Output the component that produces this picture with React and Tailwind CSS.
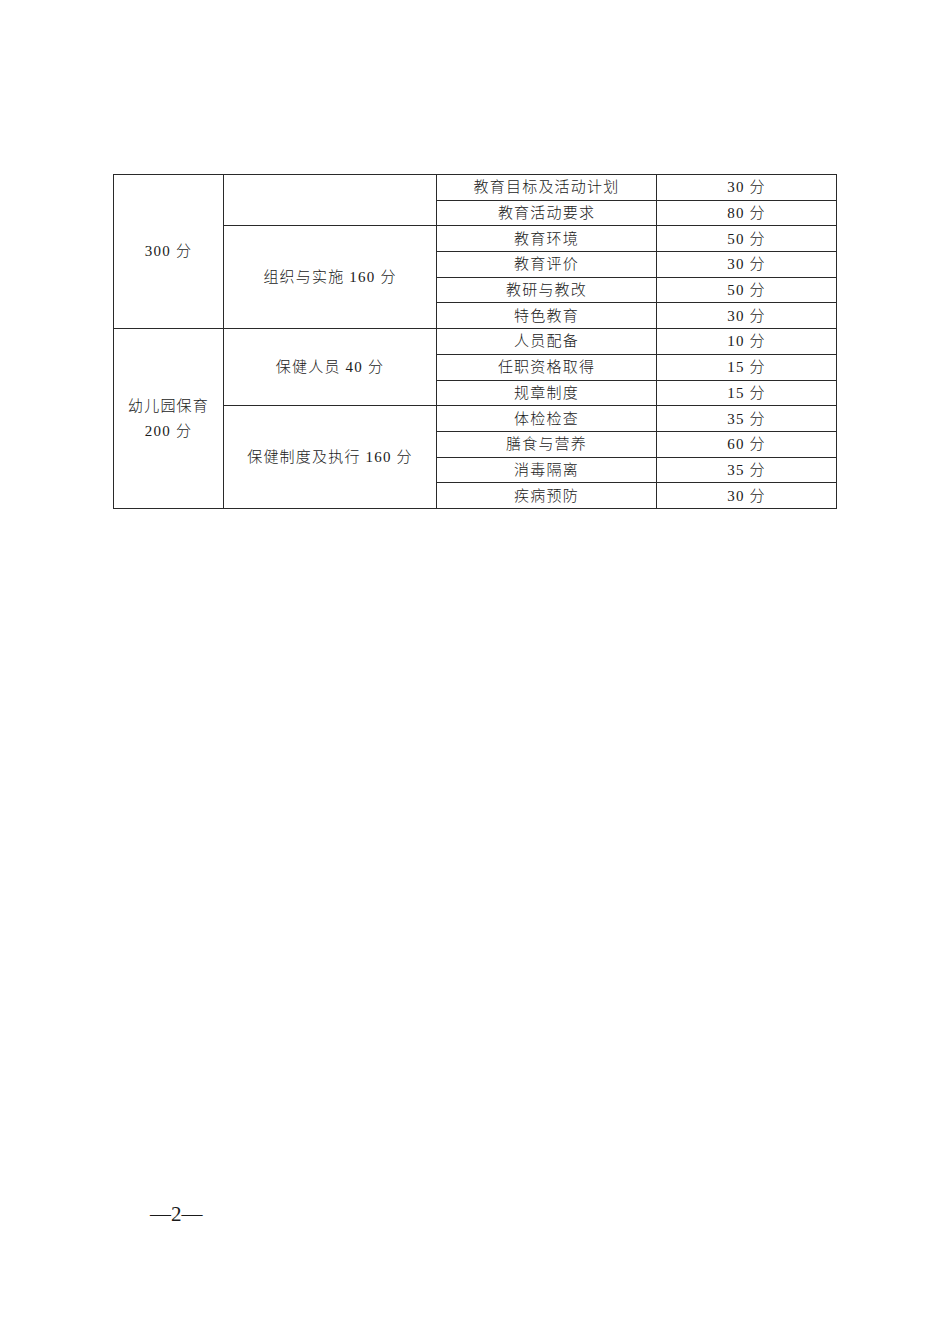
const rows = [
  ["教育目标及活动计划", "30 分"],
  ["教育活动要求", "80 分"],
  ["教育环境", "50 分"],
  ["教育评价", "30 分"],
  ["教研与教改", "50 分"],
  ["特色教育", "30 分"],
  ["人员配备", "10 分"],
  ["任职资格取得", "15 分"],
  ["规章制度", "15 分"],
  ["体检检查", "35 分"],
  ["膳食与营养", "60 分"],
  ["消毒隔离", "35 分"],
  ["疾病预防", "30 分"],
];

// first and second columns, keyed by the row they start on
const groups = {
  0: { span: 6, text: ["300 分"] },
  6: { span: 7, text: ["幼儿园保育", "200 分"] },
};
const subs = {
  0: { span: 2, text: "" },
  2: { span: 4, text: "组织与实施 160 分" },
  6: { span: 3, text: "保健人员 40 分" },
  9: { span: 4, text: "保健制度及执行 160 分" },
};

const cell = "border border-[#2a2a2a] text-center align-middle p-0";

export default function App() {
  return (
    <div
      className="w-[950px] h-[1344px] bg-white text-[#1a1a1a] relative"
      style={{ fontFamily: '"Liberation Serif", "Noto Sans CJK SC", serif' }}
    >
      <div className="pt-[174px] pl-[113px]">
        <table className="border-collapse text-[15px] font-light tracking-[1.2px] leading-[20px]">
          <colgroup>
            <col className="w-[110px]" />
            <col className="w-[213px]" />
            <col className="w-[220px]" />
            <col className="w-[180px]" />
          </colgroup>
          <tbody>
            {rows.map(([item, score], i) => (
              <tr key={i} className="h-[25.7px]">
                {groups[i] && (
                  <td rowSpan={groups[i].span} className={cell + " leading-[25px]"}>
                    {groups[i].text.map((t) => (
                      <div key={t}>{t}</div>
                    ))}
                  </td>
                )}
                {subs[i] && (
                  <td rowSpan={subs[i].span} className={cell}>
                    {subs[i].text}
                  </td>
                )}
                <td className={cell}>{item}</td>
                <td className={cell}>{score}</td>
              </tr>
            ))}
          </tbody>
        </table>
      </div>

      <div className="absolute left-[150px] top-[1200px] text-[21px] leading-[28px]">
        —2—
      </div>
    </div>
  );
}
